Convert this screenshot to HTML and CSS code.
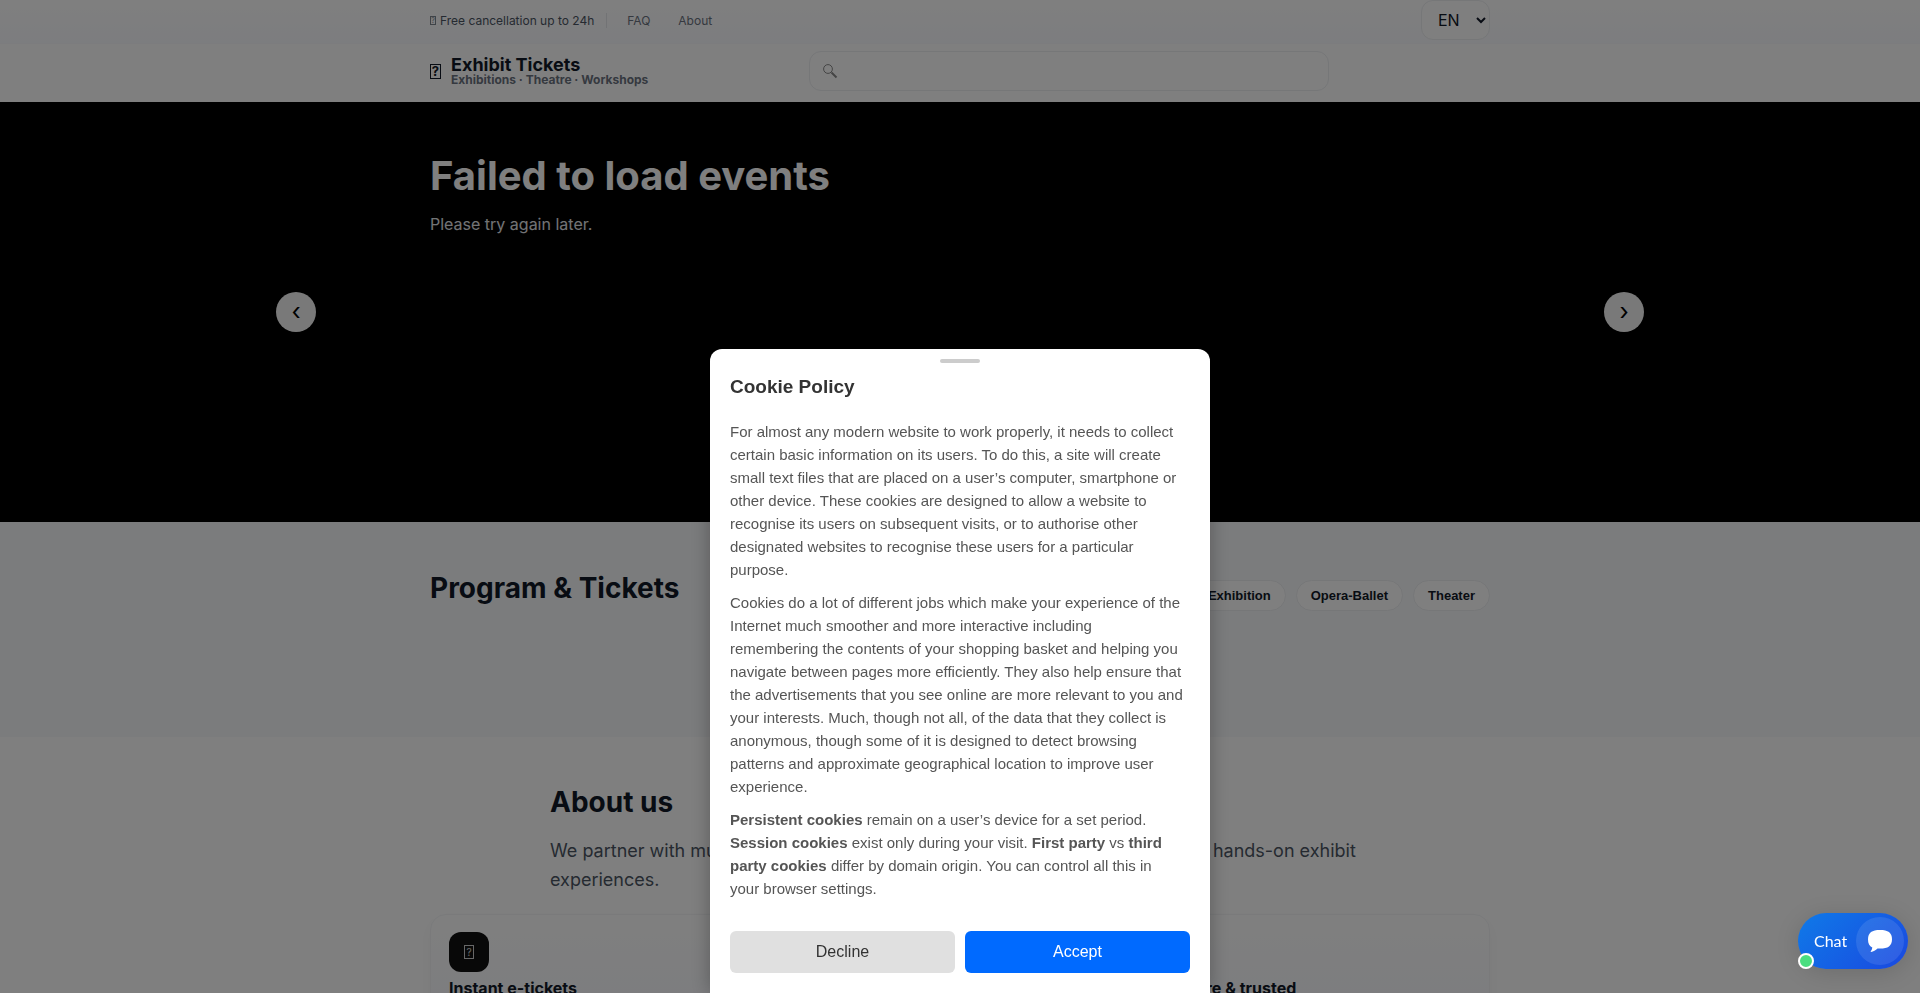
FILE: index.html
```html
<!DOCTYPE html>
<html lang="en">
<head>
<meta charset="utf-8">
<title>Exhibit Tickets</title>
<link rel="stylesheet" href="styles.css">
</head>
<body class="page modal-open">
  <div class="topbar">
    <div class="container topbar-row">
      <span class="perk"><span class="glyph glyph-sm">?</span>Free cancellation up to 24h</span>
      <nav class="top-links">
        <a href="#faq">FAQ</a>
        <a href="#about">About</a>
      </nav>
      <select class="lang" aria-label="Language"><option>EN</option><option>DE</option></select>
    </div>
  </div>
  <header class="header">
    <div class="container header-row">
      <a class="brand" href="#home">
        <span class="glyph glyph-lg">?</span>
        <span class="brand-text">
          <span class="brand-name">Exhibit Tickets</span>
          <span class="brand-sub">Exhibitions · Theatre · Workshops</span>
        </span>
      </a>
      <label class="search">
        <svg class="search-icon" viewBox="0 0 16 16" aria-hidden="true"><circle cx="6" cy="6" r="4.4"/><path class="handle" d="M9.5 9.5 14.5 14.5"/></svg>
        <input class="search-input" type="search" aria-label="Search events">
      </label>
    </div>
  </header>
  <section class="hero">
    <div class="hero-stage">
      <button class="arrow arrow-prev" type="button" aria-label="Previous">‹</button>
      <div class="container">
        <h1 class="hero-title">Failed to load events</h1>
        <p class="hero-text">Please try again later.</p>
      </div>
      <button class="arrow arrow-next" type="button" aria-label="Next">›</button>
    </div>
  </section>
  <section class="program">
    <div class="container program-row">
      <h2 class="section-title">Program &amp; Tickets</h2>
      <div class="chips">
        <button class="chip" type="button">Exhibition</button>
        <button class="chip" type="button">Opera-Ballet</button>
        <button class="chip" type="button">Theater</button>
      </div>
    </div>
  </section>
  <section class="about" id="about">
    <div class="about-intro">
      <h2 class="section-title">About us</h2>
      <p class="about-text">We partner with museums, theatres and local creators to present fairly priced hands-on exhibit experiences.</p>
    </div>
    <div class="container cards">
      <article class="card"><span class="card-icon"><span class="glyph glyph-md">?</span></span><h3 class="card-title">Instant e-tickets</h3></article>
      <article class="card"><span class="card-icon"><span class="glyph glyph-md">?</span></span><h3 class="card-title">Curated events</h3></article>
      <article class="card"><span class="card-icon"><span class="glyph glyph-md">?</span></span><h3 class="card-title">Secure &amp; trusted</h3></article>
    </div>
  </section>

  <div class="overlay">
    <div class="modal" role="dialog" aria-modal="true" aria-labelledby="cookie-title">
      <span class="grip"></span>
      <h2 class="modal-title" id="cookie-title">Cookie Policy</h2>
      <div class="modal-body">
        <p>For almost any modern website to work properly, it needs to collect certain basic information on its users. To do this, a site will create small text files that are placed on a user’s computer, smartphone or other device. These cookies are designed to allow a website to recognise its users on subsequent visits, or to authorise other designated websites to recognise these users for a particular purpose.</p>
        <p>Cookies do a lot of different jobs which make your experience of the Internet much smoother and more interactive including remembering the contents of your shopping basket and helping you navigate between pages more efficiently. They also help ensure that the advertisements that you see online are more relevant to you and your interests. Much, though not all, of the data that they collect is anonymous, though some of it is designed to detect browsing patterns and approximate geographical location to improve user experience.</p>
        <p><strong>Persistent cookies</strong> remain on a user’s device for a set period. <strong>Session cookies</strong> exist only during your visit. <strong>First party</strong> vs <strong>third party cookies</strong> differ by domain origin. You can control all this in your browser settings.</p>
      </div>
      <div class="modal-actions">
        <button class="btn btn-decline" type="button">Decline</button>
        <button class="btn btn-accept" type="button">Accept</button>
      </div>
    </div>
  </div>

  <button class="chat" type="button">
    <span class="chat-label">Chat</span>
    <span class="chat-bubble">
      <svg class="chat-icon" viewBox="0 0 24 22" aria-hidden="true"><path d="M12 0C20 0 24 2.6 24 9.2S20 18.600 12 18.600c-.9 0-1.700 0-2.500-.1C7.600 20.500 5.400 21.600 3 22c-.4 0-.5-.4-.2-.7.900-1 1.400-2.300 1.500-3.700C1.400 16.200 0 13.500 0 9.200 0 2.600 4 0 12 0Z"/></svg>
    </span>
    <span class="chat-status"></span>
  </button>
</body>
</html>
```
FILE: styles.css
```css
* { box-sizing: border-box; }
.page {
  margin: 0;
  background: #fff;
  color: #111827;
  font-family: Inter, "Liberation Sans", sans-serif;
  font-size: 16px;
}
.modal-open { height: 100vh; overflow: hidden; }
h1, h2, h3, p { margin: 0; }
a { color: inherit; text-decoration: none; }
button, select, input { font: inherit; color: inherit; }
.container { width: 100%; max-width: 1100px; margin: 0 auto; padding: 0 20px; }

.glyph { display: inline-flex; flex: none; align-items: center; justify-content: center; border: 1px solid currentColor; line-height: 1; }
.glyph-sm { width: 6px; height: 9px; font-size: 7px; opacity: .7; }
.glyph-md { width: 10px; height: 14px; font-size: 10px; opacity: .8; }
.glyph-lg { width: 11px; height: 15px; font-size: 13px; }

.topbar { background: linear-gradient(#fff, #f9fafe); border-bottom: 1px solid #f8f9fc; padding-bottom: 3px; }
.topbar-row { display: flex; align-items: center; font-size: 12px; }
.perk { display: flex; align-items: center; gap: 4px; padding-right: 12px; border-right: 1px solid #e5e7eb; color: #4b5563; }
.top-links { display: flex; gap: 28px; margin-left: 20px; color: #6b7280; }
.lang { margin-left: auto; width: 69px; height: 40px; padding: 0 0 0 12px; border: 1px solid #eceef1; border-radius: 12px; background: #fff; font-size: 16px; }

.header { background: #fff; padding: 7px 0 11px; }
.header-row { display: flex; align-items: center; }
.brand { display: flex; align-items: center; gap: 10px; width: 379px; font-weight: 700; }
.brand-text { display: flex; flex-direction: column; }
.brand-name { font-size: 18px; line-height: 18px; }
.brand-sub { font-size: 12px; line-height: 12px; color: #6b7280; }
.search { display: flex; align-items: center; gap: 8px; width: 520px; height: 40px; padding: 0 12px; border: 1px solid #eceef1; border-radius: 12px; }
.search-icon { width: 16px; height: 16px; fill: none; stroke: #888; stroke-width: 1; }
.search-icon .handle { stroke-width: 2; }
.search-input { flex: 1; min-width: 0; border: 0; outline: 0; background: none; }

.hero { background: #000; }
.hero-stage { position: relative; max-width: 1400px; min-height: 420px; margin: 0 auto; padding-top: 48px; color: #fff; }
.hero-title { font-size: 40px; line-height: 52px; font-weight: 700; }
.hero-text { margin-top: 10px; line-height: 24px; color: #e5e7eb; }
.arrow { position: absolute; top: 50%; margin-top: -20px; width: 40px; height: 40px; padding: 0; border: 0; border-radius: 50%; background: #f3f3f3; color: #000; font-size: 24px; line-height: 36px; }
.arrow-prev { left: 16px; }
.arrow-next { right: 16px; }

.program { min-height: 215px; padding: 48px 0; background: #f7f9fb; }
.program-row { display: flex; justify-content: space-between; align-items: flex-start; }
.section-title { font-size: 28px; line-height: 36px; font-weight: 700; }
.chips { display: flex; gap: 10px; padding-top: 10px; }
.chip { padding: 6px 14px; border: 1px solid #eceef1; border-radius: 16px; background: #fff; font: 700 13px/17px "Liberation Sans", Arial, sans-serif; }

.about { padding-top: 47px; }
.about-intro { max-width: 820px; margin: 0 auto; }
.about-text { margin: 16px 0 20px; font-size: 18px; line-height: 29px; color: #4b5563; }
.cards { display: grid; grid-template-columns: repeat(3, 1fr); gap: 16px; }
.card { display: flex; flex-direction: column; align-items: flex-start; gap: 6px; padding: 17px 18px; border: 1px solid #f4f5f7; border-radius: 16px; background: linear-gradient(#fff, #f9fafe); box-shadow: 0 6px 18px rgba(15, 23, 42, .04); }
.card-icon { display: grid; place-items: center; width: 40px; height: 40px; border-radius: 12px; background: #111; color: #fff; }
.card-title { font-size: 16px; line-height: 20px; }

.overlay { position: fixed; inset: 0; z-index: 10; display: flex; justify-content: center; align-items: flex-end; background: rgba(0, 0, 0, .5); }
.modal { width: 100%; max-width: 500px; padding: 10px 20px 20px; border-radius: 12px 12px 0 0; background: #fff; box-shadow: 0 0 20px rgba(0, 0, 0, .3); color: #555; font-family: "Liberation Sans", Arial, sans-serif; }
.grip { display: block; width: 40px; height: 4px; margin: 0 auto; border-radius: 2px; background: #ccc; }
.modal-title { margin: 12px 0 21px; font-size: 19px; line-height: 24px; color: #333; }
.modal-body { display: flex; flex-direction: column; gap: 10px; padding-right: 7px; font-size: 15px; line-height: 23px; }
.modal-actions { display: flex; gap: 10px; margin-top: 31px; }
.btn { flex: 1; height: 42px; border: 0; border-radius: 6px; font-size: 16px; }
.btn-decline { background: #e0e0e0; color: #333; }
.btn-accept { background: #006aff; color: #fff; }

.chat { position: fixed; right: 12px; bottom: 24px; z-index: 20; display: flex; align-items: center; justify-content: space-between; width: 110px; height: 56px; padding: 0 4px 0 16px; border: 0; border-radius: 28px; background: linear-gradient(135deg, #0f7ae8, #1a48e0); box-shadow: 0 4px 24px rgba(0, 0, 0, .14); color: #fff; font: 16px/20px Lato, sans-serif; }
.chat-bubble { display: grid; place-items: center; width: 48px; height: 48px; border-radius: 50%; background: rgba(255, 255, 255, .1); }
.chat-icon { width: 24px; height: 22px; fill: #fff; }
.chat-status { position: absolute; left: 0; bottom: 0; width: 16px; height: 16px; border: 2px solid #fff; border-radius: 50%; background: #4ade80; }
```
